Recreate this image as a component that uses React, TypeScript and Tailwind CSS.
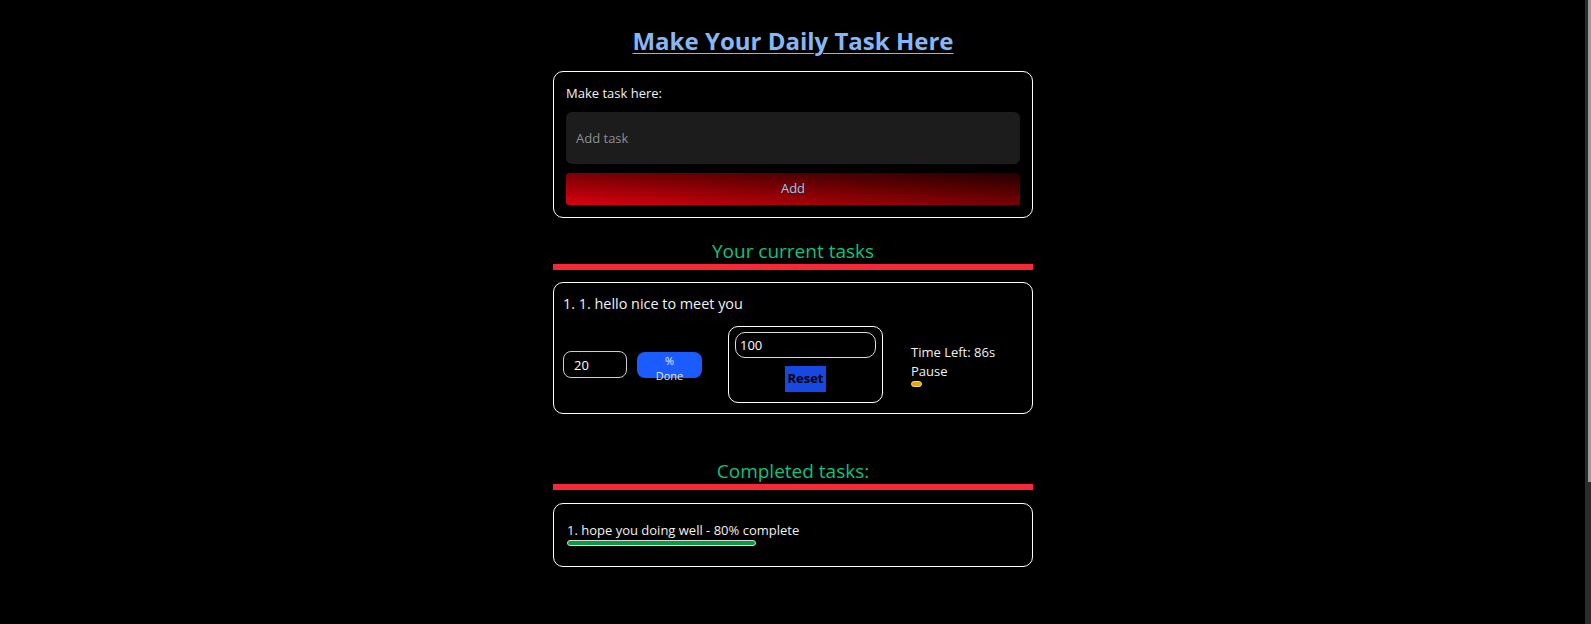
import React, { useState } from 'react';

type Task = { id: number; text: string };

const font = "font-['Open_Sans','Noto_Sans',sans-serif]";

const CurrentTask: React.FC<{ index: number; task: Task }> = ({ index, task }) => {
  const [percent, setPercent] = useState('20');
  const [seconds, setSeconds] = useState('100');

  return (
    <div className="mt-[12px] rounded-[10px] border border-white px-[9px] pt-[11px] pb-[10px]">
      <p className="text-[14.4px] leading-5 text-[#f1f1f1]">
        {index}. {task.text}
      </p>
      <div className="mt-[12px] flex items-center">
        <input
          value={percent}
          onChange={(e) => setPercent(e.target.value)}
          className="h-[27px] w-[64px] rounded-[8px] border border-[#cfcfcf] bg-black pl-[10px] text-[13px] text-white outline-none"
        />
        <button className="ml-[10px] h-[26px] w-[65px] overflow-visible rounded-[8px] bg-[#1a5cff] pt-[1px] text-center text-[11px] leading-[15px] text-[#e4ebff]">
          <span className="block">%</span>
          <span className="block">Done</span>
        </button>
        <div className="ml-[26px] flex w-[155px] flex-col items-center rounded-[10px] border border-white px-[6px] pt-[5px] pb-[10px]">
          <input
            value={seconds}
            onChange={(e) => setSeconds(e.target.value)}
            className="h-[26px] w-full rounded-[10px] border border-[#dcdcdc] bg-black pl-[4px] text-[13px] text-white outline-none"
          />
          <button className="mt-[8px] h-[26px] bg-[#1748e4] px-[2px] text-[13px] font-bold text-black">
            Reset
          </button>
        </div>
        <div className="ml-[28px] flex flex-col text-[13px] leading-[19px] text-[#f1f1f1]">
          <span>Time Left: 86s</span>
          <span>Pause</span>
          <button className="h-[6px] w-[11px] rounded-full border border-[#f5d27a] bg-[#e8a800]" />
        </div>
      </div>
    </div>
  );
};

export default function App() {
  const [draft, setDraft] = useState('');
  const tasks: Task[] = [{ id: 1, text: '1. hello nice to meet you' }];

  return (
    <div className={`flex h-screen overflow-hidden bg-black ${font}`}>
      <main className="flex-1 pl-[1px] pt-[25px]">
        <div className="mx-auto w-[480px]">
          <h1 className="text-center text-[24px] font-bold leading-8 text-[#86b7f6]">
            <span className="underline decoration-1 underline-offset-[3px]">Make Your Daily Task Here</span>
          </h1>

          <div className="mt-[14px] rounded-[10px] border border-white p-[12px]">
            <label className="block text-[13px] leading-[18px] text-[#f1f1f1]">Make task here:</label>
            <input
              value={draft}
              onChange={(e) => setDraft(e.target.value)}
              placeholder="Add task"
              className="mt-[10px] h-[52px] w-full rounded-[6px] bg-[#1c1c1c] px-[10px] text-[13px] text-white outline-none placeholder:text-[#8e8e8e]"
            />
            <button className="mt-[9px] h-[32px] w-full rounded-[3px] bg-linear-to-tr from-[#dc0010] to-[#260000] text-[13px] text-[#7fd3f7]">
              Add
            </button>
          </div>

          <h2 className="mt-[21px] border-b-[6px] border-[#f8283b] text-center text-[19px] leading-[25px] text-[#12c07e]">
            Your current tasks
          </h2>
          {tasks.map((t, i) => (
            <CurrentTask key={t.id} index={i + 1} task={t} />
          ))}

          <h2 className="mt-[45px] border-b-[6px] border-[#f8283b] text-center text-[19px] leading-[25px] text-[#12c07e]">
            Completed tasks:
          </h2>
          <div className="mt-[13px] rounded-[10px] border border-white px-[13px] pt-[17px] pb-[20px]">
            <p className="text-[13px] leading-[18px] text-[#f1f1f1]">1. hope you doing well - 80% complete</p>
            <div className="mt-[1px] h-[6px] w-[189px] overflow-hidden rounded-full border border-[#d8d8d8] bg-[#0b9a3f]" />
          </div>
        </div>
      </main>

      {/* page scrollbar */}
      <div className="flex w-[6px] justify-end bg-[#2c2c2c]">
        <div className="h-[482px] w-[3px] bg-[#9b9b9b]" />
      </div>
    </div>
  );
}
